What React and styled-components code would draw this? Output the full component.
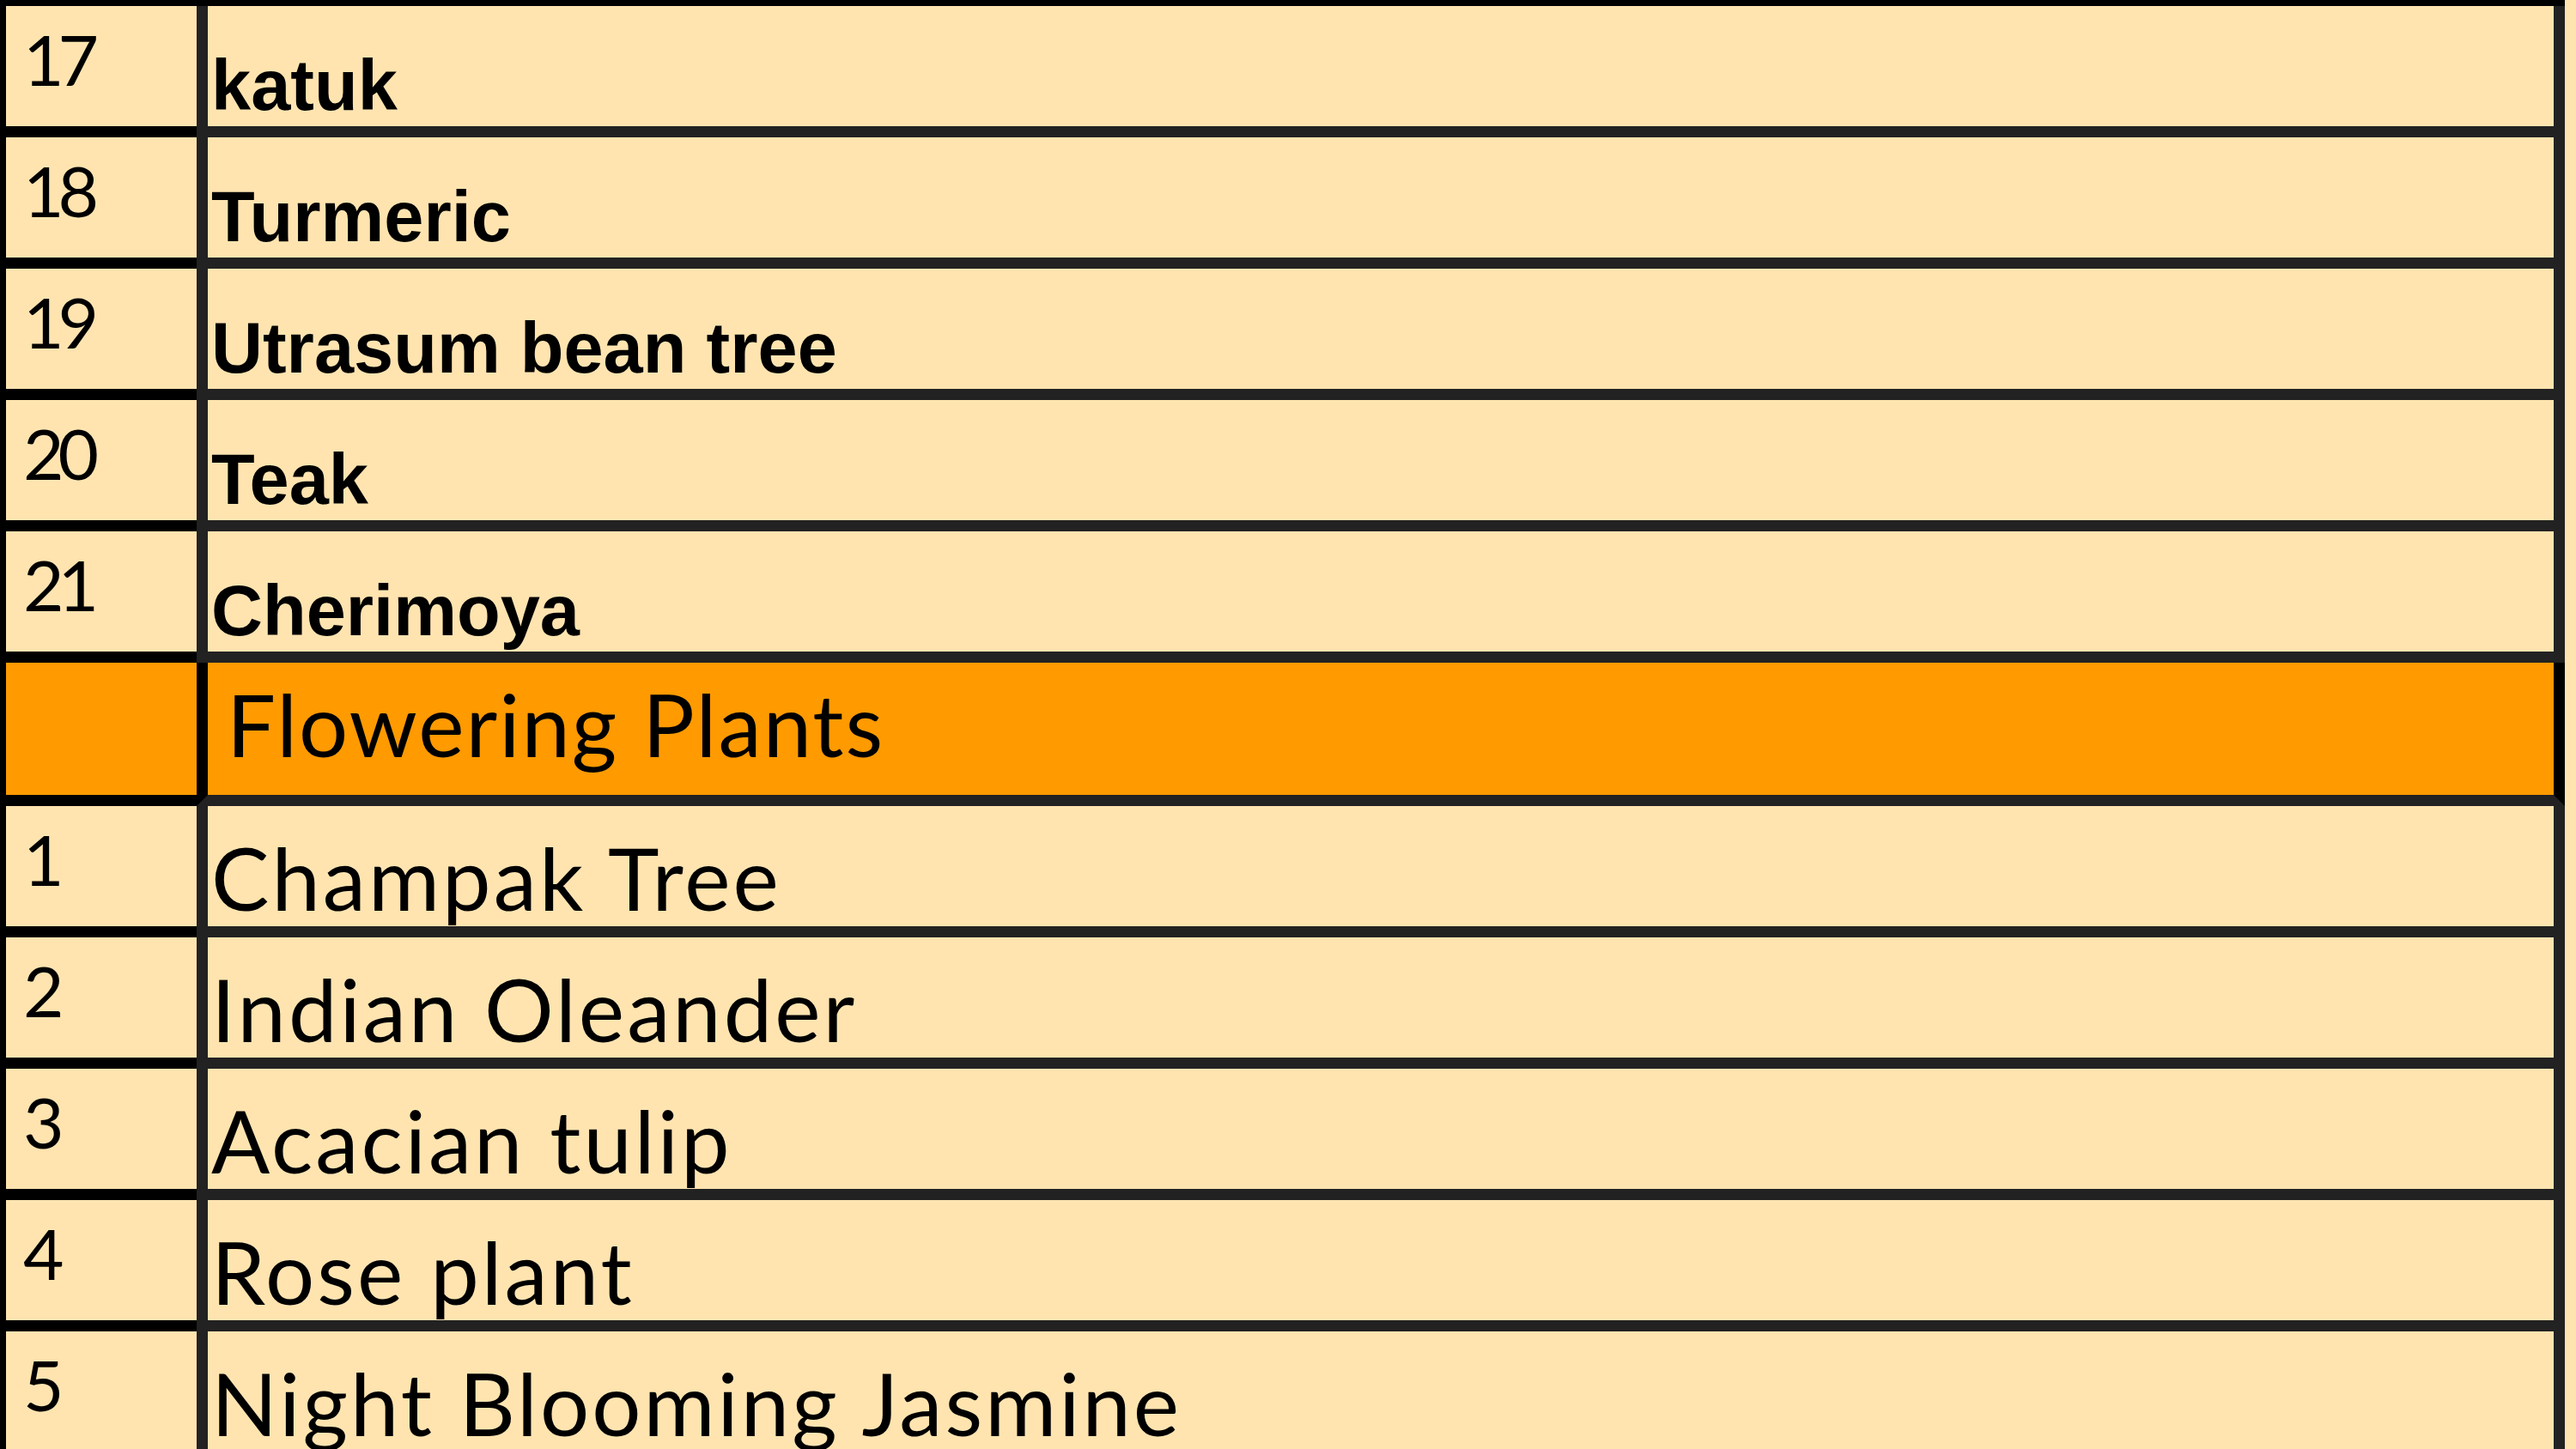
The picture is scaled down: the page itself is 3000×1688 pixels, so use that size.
import styled, { createGlobalStyle } from 'styled-components';

const GlobalStyle = createGlobalStyle`
  html, body {
    margin: 0;
    padding: 0;
    background: #ffe4b0;
    overflow: hidden;
  }
`

const Page = styled.div`
  width: 3000px;
  height: 1688px;
  overflow: hidden;
  background: #ffe4b0;
`

const Table = styled.div`
  width: 2987px;
  border-top: 7px solid #000;
  border-left: 7px solid #000;
  box-sizing: border-box;
`

const Row = styled.div`
  display: grid;
  grid-template-columns: 222px 1fr;
  height: ${props => props.$heading ? 167 : 153}px;
  background: ${props => props.$heading ? '#ff9a00' : '#ffe4b0'};
`

const NumCell = styled.div`
  box-sizing: border-box;
  border-bottom: 13px solid #000;
  padding: 20px 0 0 20px;
  font-family: Lato, "Noto Sans", sans-serif;
  font-weight: 400;
  font-size: 82px;
  letter-spacing: -7px;
  line-height: 1;
  color: #000;
`

const NameCell = styled.div`
  box-sizing: border-box;
  display: flex;
  align-items: flex-end;
  border-left: 13px solid ${props => props.$heading ? '#000' : '#222'};
  border-right: 13px solid ${props => props.$heading ? '#000' : '#222'};
  border-bottom: 13px solid #222;
  padding: 0 0 ${props => props.$heading ? 32 : 6}px ${props => props.$heading ? 22 : 4}px;
  color: #000;
  line-height: 1;
  white-space: nowrap;
  font-family: ${props => props.$bold ? '"Liberation Sans", Arial, sans-serif' : 'Lato, "Noto Sans", sans-serif'};
  font-weight: ${props => props.$bold ? 700 : 400};
  font-size: ${props => props.$bold ? 83 : 101}px;
  letter-spacing: ${props => props.$bold ? 0 : props.$heading ? 2 : 3}px;
`

const trees = [
  ['17', 'katuk'],
  ['18', 'Turmeric'],
  ['19', 'Utrasum bean tree'],
  ['20', 'Teak'],
  ['21', 'Cherimoya'],
]

const flowers = [
  ['1', 'Champak Tree'],
  ['2', 'Indian Oleander'],
  ['3', 'Acacian tulip'],
  ['4', 'Rose plant'],
  ['5', 'Night Blooming Jasmine'],
]

export default function App() {
  return (
    <Page>
      <GlobalStyle />
      <Table>
        {trees.map(([n, name]) => (
          <Row key={n}>
            <NumCell>{n}</NumCell>
            <NameCell $bold>{name}</NameCell>
          </Row>
        ))}
        <Row $heading>
          <NumCell />
          <NameCell $heading>Flowering Plants</NameCell>
        </Row>
        {flowers.map(([n, name]) => (
          <Row key={'f' + n}>
            <NumCell>{n}</NumCell>
            <NameCell>{name}</NameCell>
          </Row>
        ))}
      </Table>
    </Page>
  );
}
